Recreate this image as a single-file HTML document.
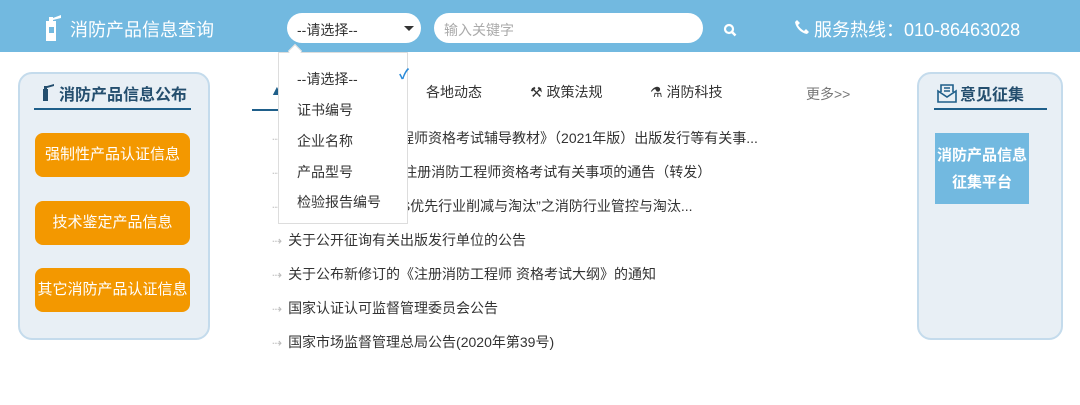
<!DOCTYPE html>
<html><head><meta charset="utf-8"><style>
*{margin:0;padding:0;box-sizing:border-box}
body{width:1080px;height:405px;overflow:hidden;background:#fff;font-family:"Liberation Sans","Noto Sans CJK SC",sans-serif;color:#333;position:relative}
.a{position:absolute;white-space:nowrap}
.hdr{left:0;top:0;width:1080px;height:52px;background:#72b9e0}
.pill{background:#fff;border-radius:15px;height:30px;top:13px}
.panel{background:#e8eff5;border:2px solid #c4dbec;border-radius:14px;top:72px;height:268px}
.btn{left:35px;width:155px;height:44px;background:#f39800;border-radius:8px;color:#fff;font-size:15px;text-align:center;line-height:44px}
.news{left:272px;font-size:14px;color:#333}
.news:before{content:"⇢";color:#bbb;font-size:12px;margin-right:6px}
.dd{font-size:14px;left:297px;color:#333}
</style></head><body>
<div class="a hdr"></div>
<svg class="a" style="left:43px;top:13px" width="20" height="28" viewBox="0 0 20 28"><path d="M3 8h10v20H3z M6 4h4v4H6z M10 5l8-3v3l-8 2z" fill="#fff"/><rect x="6" y="14" width="5" height="6" fill="#72b9e0"/></svg>
<div class="a" style="left:70px;top:16px;font-size:18px;color:#fff">消防产品信息查询</div>
<div class="a pill" style="left:287px;width:134px"></div>
<div class="a" style="left:297px;top:20px;font-size:14px;color:#333">--请选择--</div>
<div class="a" style="left:404px;top:26px;width:0;height:0;border-left:5px solid transparent;border-right:5px solid transparent;border-top:5px solid #333"></div>
<div class="a pill" style="left:434px;width:269px"></div>
<div class="a" style="left:444px;top:20px;font-size:14px;color:#aaa">输入关键字</div>
<svg class="a" style="left:723px;top:23px" width="14" height="14" viewBox="0 0 14 14"><circle cx="6" cy="6" r="4" stroke="#fff" stroke-width="2.2" fill="none"/><path d="M9 9l3.5 3.5" stroke="#fff" stroke-width="2.5"/></svg>
<svg class="a" style="left:794px;top:19px" width="16" height="16" viewBox="0 0 16 16"><path d="M3 1l3 3-2 2c1 2 3 4 6 6l2-2 3 3-2 2C7 14 2 9 1 3z" fill="#fff"/></svg>
<div class="a" style="left:814px;top:16px;font-size:18px;color:#fff">服务热线：010-86463028</div>

<div class="a panel" style="left:18px;width:192px"></div>
<svg class="a" style="left:40px;top:83px" width="16" height="18" viewBox="0 0 16 18"><path d="M3 6h5v12H3z M4 3h3v3H4z M7 3l7-2v2l-7 2z" fill="#244e6e"/></svg>
<div class="a" style="left:59px;top:81px;font-size:16px;font-weight:bold;color:#244e6e">消防产品信息公布</div>
<div class="a" style="left:34px;top:108px;width:157px;height:2px;background:#1f5f8a"></div>
<div class="a btn" style="top:133px">强制性产品认证信息</div>
<div class="a btn" style="top:201px">技术鉴定产品信息</div>
<div class="a btn" style="top:268px">其它消防产品认证信息</div>

<div class="a" style="left:252px;top:109px;width:60px;height:2px;background:#1f5f8a"></div>
<div class="a" style="left:270px;top:82px;font-size:14px;color:#1f5f8a">▲</div>
<div class="a" style="left:426px;top:82px;font-size:14px">各地动态</div>
<div class="a" style="left:530px;top:82px;font-size:14px">⚒ 政策法规</div>
<div class="a" style="left:650px;top:82px;font-size:14px">⚗ 消防科技</div>
<div class="a" style="left:806px;top:84px;font-size:14px;color:#777">更多&gt;&gt;</div>

<div class="a news" style="top:128px">关于《注册消防工程师资格考试辅导教材》（2021年版）出版发行等有关事...</div>
<div class="a news" style="top:162px">关于2021年度一级注册消防工程师资格考试有关事项的通告（转发）</div>
<div class="a news" style="top:196px">关于开展我国PFOS优先行业削减与淘汰”之消防行业管控与淘汰...</div>
<div class="a news" style="top:230px">关于公开征询有关出版发行单位的公告</div>
<div class="a news" style="top:264px">关于公布新修订的《注册消防工程师 资格考试大纲》的通知</div>
<div class="a news" style="top:298px">国家认证认可监督管理委员会公告</div>
<div class="a news" style="top:332px">国家市场监督管理总局公告(2020年第39号)</div>

<div class="a" style="left:278px;top:52px;width:130px;height:172px;background:#fff;border:1px solid #ddd"></div>
<div class="a" style="left:290px;top:46px;width:10px;height:10px;background:#fff;border-left:1px solid #ddd;border-top:1px solid #ddd;transform:rotate(45deg)"></div>
<div class="a dd" style="top:69px">--请选择--</div>
<div class="a" style="left:399px;top:64px;font-size:14px;color:#2a8ad8;font-weight:bold">✓</div>
<div class="a dd" style="top:100px">证书编号</div>
<div class="a dd" style="top:131px">企业名称</div>
<div class="a dd" style="top:162px">产品型号</div>
<div class="a dd" style="top:192px">检验报告编号</div>

<div class="a panel" style="left:917px;width:146px"></div>
<svg class="a" style="left:936px;top:83px" width="22" height="20" viewBox="0 0 22 20"><path d="M2 8v11h18V8l-9 6z M5 9V2h12v7" stroke="#1f5f8a" stroke-width="1.6" fill="none"/><path d="M8 5h6M8 8h6" stroke="#1f5f8a" stroke-width="1.4"/></svg>
<div class="a" style="left:960px;top:81px;font-size:16px;font-weight:bold;color:#244e6e">意见征集</div>
<div class="a" style="left:934px;top:108px;width:113px;height:2px;background:#1f5f8a"></div>
<div class="a" style="left:935px;top:133px;width:94px;height:71px;background:#72b9e0;color:#fff;font-size:15px;font-weight:bold;text-align:center;line-height:27px;padding-top:9px">消防产品信息<br>征集平台</div>
</body></html>
